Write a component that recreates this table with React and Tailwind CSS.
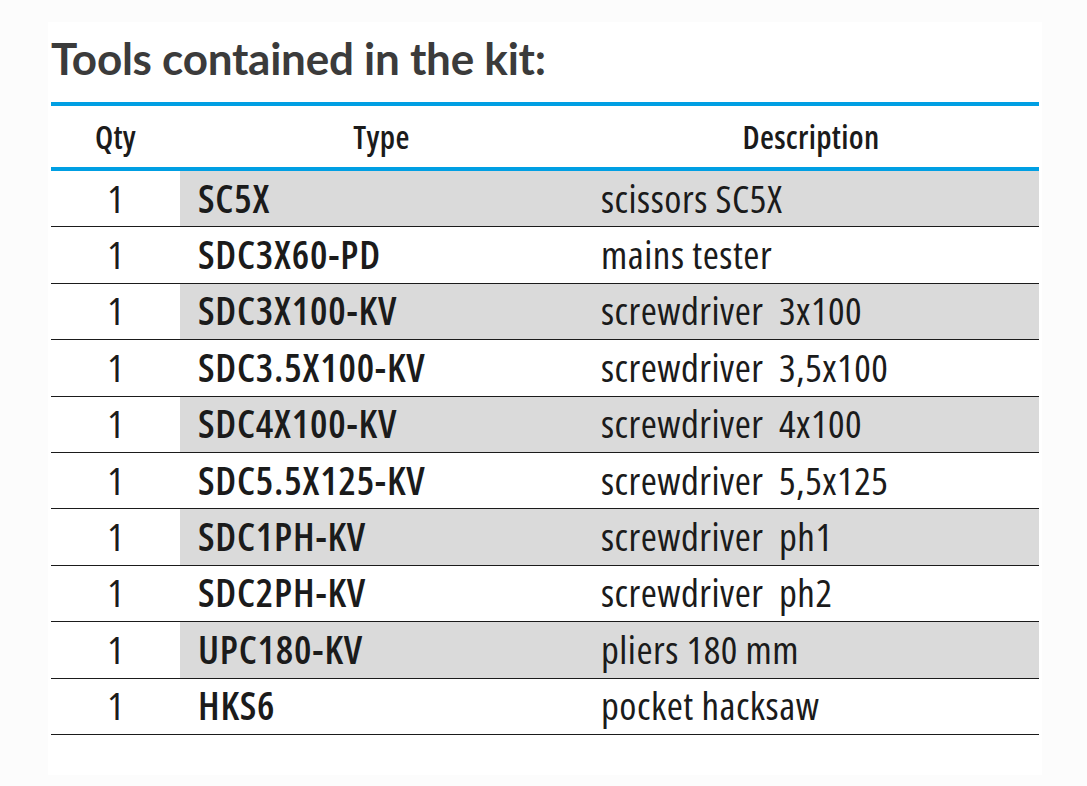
const rows = [
	{ qty: 1, type: "SC5X", desc: "scissors SC5X" },
	{ qty: 1, type: "SDC3X60-PD", desc: "mains tester" },
	{ qty: 1, type: "SDC3X100-KV", desc: "screwdriver\u00a0 3x100" },
	{ qty: 1, type: "SDC3.5X100-KV", desc: "screwdriver\u00a0 3,5x100" },
	{ qty: 1, type: "SDC4X100-KV", desc: "screwdriver\u00a0 4x100" },
	{ qty: 1, type: "SDC5.5X125-KV", desc: "screwdriver\u00a0 5,5x125" },
	{ qty: 1, type: "SDC1PH-KV", desc: "screwdriver\u00a0 ph1" },
	{ qty: 1, type: "SDC2PH-KV", desc: "screwdriver\u00a0 ph2" },
	{ qty: 1, type: "UPC180-KV", desc: "pliers 180 mm" },
	{ qty: 1, type: "HKS6", desc: "pocket hacksaw" },
];

function App() {
	return (
		<div className="min-h-[786px] w-[1087px] bg-[#fcfcfc] pt-[22px] pl-[48px]">
			<div className="w-[994px] bg-white pl-[3px] pb-[40px]">
				{/* Title */}
				<h1 className="font-['Lato',sans-serif] font-bold text-[44px] leading-none text-[#3b3b3b] pt-[14px] pb-[22px] tracking-[-0.25px]">
					Tools contained in the kit:
				</h1>

				<div className="w-[988px] font-['Open_Sans',sans-serif] font-stretch-75% text-[#1b1b1b]">
					{/* Header */}
					<div className="grid grid-cols-[129px_403px_456px] h-[69px] border-y-4 border-[#009fe3] items-center text-[32px] font-semibold tracking-[0.3px]">
						<div className="text-center">Qty</div>
						<div className="text-center">Type</div>
						<div className="text-center">Description</div>
					</div>

					{/* Rows */}
					{rows.map((row, i) => (
						<div
							key={i}
							className="grid grid-cols-[129px_403px_456px] h-[56.4px] border-b border-[#1b1b1b] text-[39px] leading-none"
						>
							<div className="flex items-center justify-center pb-[3px]">{row.qty}</div>
							<div className={`flex items-center pl-[18px] pb-[3px] font-semibold tracking-[0.8px] ${i % 2 === 0 ? "bg-[#dadada]" : ""}`}>
								{row.type}
							</div>
							<div className={`flex items-center pl-[18px] pb-[3px] whitespace-pre tracking-[0.5px] ${i % 2 === 0 ? "bg-[#dadada]" : ""}`}>
								{row.desc}
							</div>
						</div>
					))}
				</div>
			</div>
		</div>
	);
}

export default App;
